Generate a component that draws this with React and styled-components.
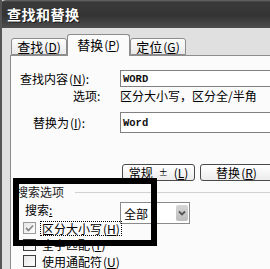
import React from "react";
import styled, { createGlobalStyle } from "styled-components";

const GlobalStyle = createGlobalStyle`
    html, body {
        margin: 0;
        padding: 0;
        background: #e0e0e0;
    }
    body {
        font-family: "Noto Sans CJK SC", "Liberation Sans", sans-serif;
        font-size: 12px;
        color: #000;
    }
`;

const Window = styled.div`
    position: relative;
    width: 270px;
    height: 269px;
    overflow: hidden;
    box-sizing: border-box;
    border-left: 2px solid #555;
    background: #dcdcdc;
`;

const TitleBar = styled.div`
    display: flex;
    align-items: center;
    height: 28px;
    margin-left: -2px;
    padding-left: 7px;
    border-top-left-radius: 6px;
    background: linear-gradient(#6a6a6a 0, #3a3a3a 2px, #343434 55%, #4e4e4e 100%);
`;

const Title = styled.span`
    color: #fff;
    font-size: 14px;
    font-weight: bold;
    line-height: 16px;
    letter-spacing: 0.5px;
    text-shadow: 1px 1px 0 #1a1a1a;
`;

const Body = styled.div`
    padding: 7px 0 0 8px;
    background: #e0e0e0;
    height: 100%;
`;

const TabRow = styled.div`
    display: flex;
    align-items: flex-end;
    height: 20px;
    padding-left: 1px;
    position: relative;
    z-index: 1;
`;

const Tab = styled.div`
    box-sizing: border-box;
    display: flex;
    align-items: center;
    justify-content: center;
    width: ${(p) => p.$w}px;
    height: ${(p) => (p.$active ? 22 : 17)}px;
    margin-bottom: ${(p) => (p.$active ? -1 : 0)}px;
    padding-bottom: ${(p) => (p.$active ? 2 : 0)}px;
    border: 1px solid #8c8c8c;
    border-bottom: ${(p) => (p.$active ? "none" : "1px solid #8c8c8c")};
    border-radius: 3px 3px 0 0;
    background: ${(p) =>
        p.$active ? "#fbfbfb" : "linear-gradient(#fdfdfd, #e9e9e9)"};
    font-size: 13px;
    line-height: 15px;
    white-space: nowrap;
`;

const Key = styled.u`
    text-underline-offset: 1px;
`;

const Paren = styled.span`
    font-size: 12px;
    margin-left: 1px;
`;

const Panel = styled.div`
    position: relative;
    border-top: 1px solid #8c8c8c;
    border-left: 1px solid #8c8c8c;
    background: #fbfbfb;
    height: 240px;
    width: 300px;
    padding-top: 14px;
    box-sizing: border-box;
`;

const FieldRow = styled.div`
    display: grid;
    grid-template-columns: 109px 1fr;
    align-items: center;
    height: ${(p) => p.$h}px;
    margin-top: ${(p) => p.$mt || 0}px;
`;

const Label = styled.span`
    padding-left: ${(p) => p.$indent}px;
    line-height: 14px;
    white-space: nowrap;
`;

const Value = styled.span`
    line-height: 14px;
    white-space: nowrap;
`;

const TextBox = styled.div`
    box-sizing: border-box;
    display: flex;
    align-items: center;
    width: 200px;
    height: ${(p) => p.$h}px;
    padding-left: 2px;
    border: 1px solid #808080;
    background: #fff;
    font-family: "Liberation Mono", "DejaVu Sans Mono", monospace;
    font-size: 10.5px;
    font-weight: bold;
    color: #111;
`;

const ButtonRow = styled.div`
    display: flex;
    gap: 5px;
    margin-top: 31px;
    padding-left: 111px;
`;

const Button = styled.div`
    box-sizing: border-box;
    display: flex;
    align-items: center;
    justify-content: center;
    flex-shrink: 0;
    width: 73px;
    height: 17px;
    border: 1px solid #4a4a4a;
    border-radius: 3px;
    background: linear-gradient(#ffffff, #ececec);
    line-height: 14px;
    white-space: nowrap;
`;

const Plus = styled.span`
    font-size: 9px;
    margin: 0 5px 0 6px;
`;

const Legend = styled.div`
    display: flex;
    align-items: center;
    height: 14px;
    margin-top: 4px;
    padding-left: 5px;
    line-height: 14px;
    color: #222;
`;

const LegendLine = styled.div`
    flex: 1;
    margin-left: 11px;
    border-top: 1px solid #d0d0d0;
`;

const SearchRow = styled.div`
    display: grid;
    grid-template-columns: 109px 1fr;
    align-items: start;
    height: 16px;
    margin-top: 3px;
`;

const SearchLabel = styled.span`
    padding-left: 14px;
    line-height: 16px;
`;

const Select = styled.div`
    box-sizing: border-box;
    display: flex;
    align-items: center;
    justify-content: space-between;
    width: 70px;
    height: 22px;
    padding: 0 1px 0 3px;
    border: 1px solid #8a8a8a;
    background: #fff;
    font-size: 12px;
`;

const SelectArrow = styled.div`
    display: flex;
    align-items: center;
    justify-content: center;
    width: 12px;
    height: 16px;
    background: linear-gradient(#d6d6d6, #bdbdbd);
    border-radius: 2px;
`;

const CheckList = styled.div`
    margin-top: 2px;
    padding-left: 12px;
`;

const CheckRow = styled.div`
    display: flex;
    align-items: center;
    gap: 4px;
    height: 16.5px;
`;

const Box = styled.div`
    box-sizing: border-box;
    display: flex;
    align-items: center;
    justify-content: center;
    width: 13px;
    height: 12px;
    border: 1px solid ${(p) => (p.$checked ? "#9a9a9a" : "#3c3c3c")};
    background: linear-gradient(135deg, #e6e6e6, #ffffff);
`;

const CheckText = styled.span`
    box-sizing: border-box;
    height: 15px;
    padding: 0 1px;
    line-height: 14px;
    border: 1px dotted ${(p) => (p.$focus ? "#000" : "transparent")};
    white-space: nowrap;
`;

const Highlight = styled.div`
    position: absolute;
    left: 11px;
    top: 178px;
    width: 144px;
    height: 68px;
    box-sizing: border-box;
    border: 6px solid #000;
    pointer-events: none;
    z-index: 5;
`;

function Check({ checked, focus, children }) {
    return (
        <CheckRow>
            <Box $checked={checked}>
                {checked && (
                    <svg width="9" height="8" viewBox="0 0 9 8">
                        <polyline
                            points="1,4 3.5,6.5 8,1.5"
                            fill="none"
                            stroke="#8a8a8a"
                            strokeWidth="1.8"
                        />
                    </svg>
                )}
            </Box>
            <CheckText $focus={focus}>{children}</CheckText>
        </CheckRow>
    );
}

function App() {
    return (
        <>
            <GlobalStyle />
            <Window>
                <TitleBar>
                    <Title>查找和替换</Title>
                </TitleBar>
                <Body>
                    <TabRow>
                        <Tab $w={56}>
                            查找<Paren>(<Key>D</Key>)</Paren>
                        </Tab>
                        <Tab $w={63} $active>
                            替换<Paren>(<Key>P</Key>)</Paren>
                        </Tab>
                        <Tab $w={56}>
                            定位<Paren>(<Key>G</Key>)</Paren>
                        </Tab>
                    </TabRow>
                    <Panel>
                        <FieldRow $h={17}>
                            <Label $indent={9}>
                                查找内容<Paren>(<Key>N</Key>)</Paren>:
                            </Label>
                            <TextBox $h={17}>WORD</TextBox>
                        </FieldRow>
                        <FieldRow $h={14} $mt={2}>
                            <Label $indent={62}>选项:</Label>
                            <Value>区分大小写，区分全/半角</Value>
                        </FieldRow>
                        <FieldRow $h={21} $mt={9}>
                            <Label $indent={22}>
                                替换为<Paren>(<Key>I</Key>)</Paren>:
                            </Label>
                            <TextBox $h={21}>Word</TextBox>
                        </FieldRow>
                        <ButtonRow>
                            <Button>
                                常规<Plus>±</Plus>
                                <Paren>(<Key>L</Key>)</Paren>
                            </Button>
                            <Button>
                                替换<Paren>(<Key>R</Key>)</Paren>
                            </Button>
                        </ButtonRow>
                        <Legend>
                            搜索选项
                            <LegendLine />
                        </Legend>
                        <SearchRow>
                            <SearchLabel>
                                搜索<Key>:</Key>
                            </SearchLabel>
                            <Select>
                                全部
                                <SelectArrow>
                                    <svg width="8" height="6" viewBox="0 0 8 6">
                                        <polyline
                                            points="1,1.5 4,4.5 7,1.5"
                                            fill="none"
                                            stroke="#555"
                                            strokeWidth="1.8"
                                        />
                                    </svg>
                                </SelectArrow>
                            </Select>
                        </SearchRow>
                        <CheckList>
                            <Check checked focus>
                                区分大小写<Paren>(<Key>H</Key>)</Paren>
                            </Check>
                            <Check>
                                全字匹配<Paren>(<Key>Y</Key>)</Paren>
                            </Check>
                            <Check>
                                使用通配符<Paren>(<Key>U</Key>)</Paren>
                            </Check>
                        </CheckList>
                    </Panel>
                </Body>
                <Highlight />
            </Window>
        </>
    );
}

export default App;
